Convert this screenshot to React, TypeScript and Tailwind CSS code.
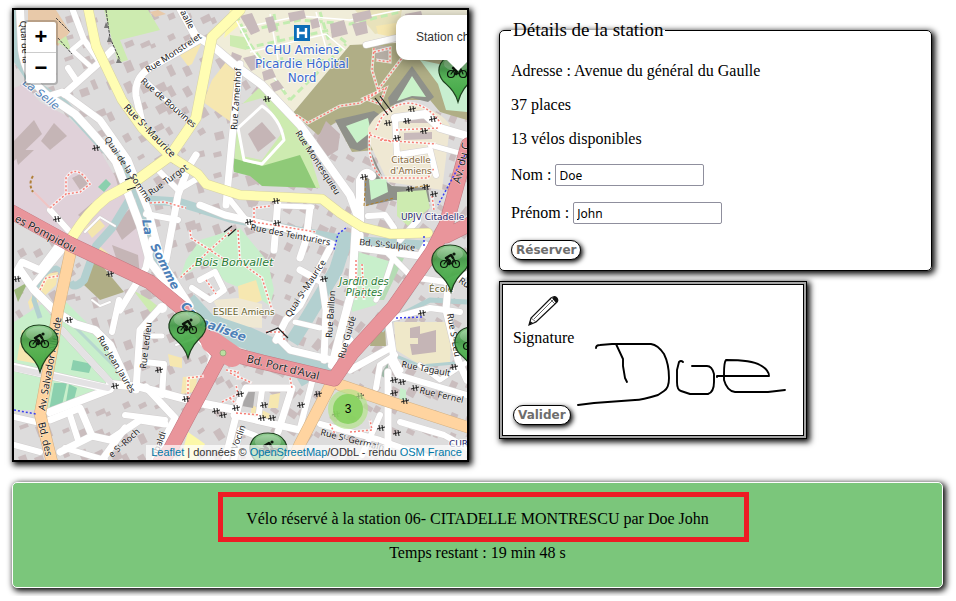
import React from 'react';

type Road = { d: string; w: number };

const whiteRoads: Road[] = [
  { d: 'M20 8L22 50Q26 78 48 96L75 114Q100 140 116 162L140 225L150 262L180 300L196 318', w: 8 },
  { d: 'M50 96L62 92L100 120L128 160L148 210L162 262L190 306', w: 7 },
  { d: 'M64 94L100 62L112 50', w: 7 },
  { d: 'M72 8L84 40L100 62', w: 6 },
  { d: 'M84 40L72 50L90 66', w: 5 },
  { d: 'M68 68L76 80', w: 6 },
  { d: 'M180 8L195 35L215 48L236 66L262 85L300 125L350 195L360 222', w: 8 },
  { d: 'M199 40L150 68Q134 78 136 96L142 122', w: 7 },
  { d: 'M143 78L192 125', w: 4 },
  { d: 'M240 64L236 100L232 140L226 205', w: 7 },
  { d: 'M196 155L188 168L178 195L166 260', w: 7 },
  { d: 'M160 172L178 190L195 180', w: 6 },
  { d: 'M200 205L225 215L300 232L332 244', w: 7 },
  { d: 'M146 214L178 220', w: 6 },
  { d: 'M230 200L250 225', w: 6 },
  { d: 'M278 200L274 250', w: 7 },
  { d: 'M310 208L306 240L300 258', w: 7 },
  { d: 'M282 206L312 207', w: 5 },
  { d: 'M330 248L300 305L286 320L276 340', w: 7 },
  { d: 'M356 222L352 290L332 365', w: 8 },
  { d: 'M360 222L360 180Q365 168 372 176', w: 8 },
  { d: 'M368 216L385 215L394 228', w: 6 },
  { d: 'M360 235L360 248L420 256L426 245', w: 7 },
  { d: 'M385 250L410 275', w: 6 },
  { d: 'M418 220L400 240', w: 6 },
  { d: 'M394 255L385 282L376 300', w: 5 },
  { d: 'M300 270L322 282L326 310L324 360', w: 7 },
  { d: 'M280 340L290 350L332 360L350 340', w: 7 },
  { d: 'M295 322L320 328', w: 5 },
  { d: 'M390 348L350 370', w: 7 },
  { d: 'M388 320L394 360L400 370', w: 7 },
  { d: 'M386 320L430 308L460 312', w: 6 },
  { d: 'M448 285L446 310L458 360L467 380', w: 7 },
  { d: 'M418 278L446 282L467 274', w: 6 },
  { d: 'M390 360L398 375L467 395', w: 6 },
  { d: 'M376 388L380 365L395 355', w: 6 },
  { d: 'M388 372L388 455', w: 7 },
  { d: 'M380 415L362 455', w: 6 },
  { d: 'M320 424L380 440L430 458', w: 6 },
  { d: 'M400 422L444 435L467 448', w: 6 },
  { d: 'M467 362L440 380L420 365', w: 5 },
  { d: 'M14 276L22 262L40 270L58 246', w: 7 },
  { d: 'M34 284L64 248', w: 6 },
  { d: 'M20 270L34 290L56 312L75 324L95 330L110 345L126 380', w: 8 },
  { d: 'M120 310L146 268L152 240', w: 7 },
  { d: 'M119 300L112 332', w: 6 },
  { d: 'M14 367L110 389L50 412', w: 8 },
  { d: 'M62 330L112 384', w: 6 },
  { d: 'M110 384L140 387L200 403L236 410', w: 8 },
  { d: 'M146 387L175 418L155 458', w: 7 },
  { d: 'M136 390L140 330L160 308', w: 7 },
  { d: 'M144 362L164 364L162 395', w: 6 },
  { d: 'M148 336L162 336', w: 5 },
  { d: 'M50 420L80 408L92 436L60 452', w: 7 },
  { d: 'M70 415L78 440', w: 6 },
  { d: 'M92 436L110 440L140 420L165 424', w: 7 },
  { d: 'M125 415L165 420', w: 6 },
  { d: 'M14 417L36 422', w: 6 },
  { d: 'M14 445L40 452', w: 6 },
  { d: 'M65 448L105 460', w: 6 },
  { d: 'M102 460L125 428', w: 7 },
  { d: 'M225 460L240 400L246 388L292 388L278 432', w: 7 },
  { d: 'M262 390L258 420', w: 6 },
  { d: 'M234 415L300 430', w: 7 },
  { d: 'M300 428L312 382', w: 6 },
  { d: 'M234 460L240 430L256 436', w: 6 },
  { d: 'M200 280L215 272L224 290L210 300L192 288', w: 6 },
  { d: 'M366 45L396 38', w: 6 },
  { d: 'M395 118L425 114L440 128L467 136', w: 8 },
  { d: 'M395 118L397 155L430 150L436 175', w: 6 },
  { d: 'M430 145L467 155', w: 5 },
  { d: 'M50 210L68 230', w: 6 },
  { d: 'M176 345L196 338L210 355L206 372', w: 2 },
  { d: 'M85 232L100 217L115 226', w: 2 },
  { d: 'M92 300L100 306L110 302', w: 2 },
];

const mapColours: [string, string][] = [
  // industrial ground and its sheds
  ['M14 88L24 84L40 102L65 115L95 142L120 185L140 220L150 262L146 286L80 250L14 207Z', '#e0d1d9'],
  ['M14 141L34 120L42 134L14 161Z', '#c5b5b6'],
  ['M41 141L54 123L67 136L50 150Z', '#c5b5b6'],
  ['M14 150L34 150L18 165Z', '#c5b5b6'],
  ['M72 178L82 173L90 184L80 190Z', '#c5b5b6'],
  ['M78 215L92 203L98 210L84 220Z', '#c5b5b6'],
  ['M115 176L126 172L130 180L118 186Z', '#c5b5b6'],
  ['M114 226L132 206L140 225L122 240Z', '#c5b5b6'],
  ['M112 245L138 255L140 276L118 264Z', '#c5b5b6'],
  ['M85 228L98 218L105 226L92 238Z', '#f3e6ae'],
  ['M96 243L118 262L98 254Z', '#f3e6ae'],
  ['M98 187L106 179L111 184L104 192Z', '#8bd0ae'],
  // north-west fields
  ['M28 10L56 10L70 32L58 46L28 22Z', '#e8c9a9'],
  ['M57 42L66 36L72 52Z', '#cdebb0'],
  ['M104 10L148 10L160 30L120 40L128 60L118 63Z', '#cdebb0'],
  ['M176 50L202 42L192 64L188 66Z', '#f6e7b0'],
  ['M212 80L226 62L240 66L231 122L203 102Z', '#f6e7b0'],
  ['M14 290L28 282L18 302Z', '#9db77a'],
  ['M150 12L158 10L166 14L155 17Z', '#e8c9a9'],
  // hospital grounds
  ['M232 10L467 10L467 44L350 45L293 113L278 95L232 62L214 42Z', '#f0edd9'],
  ['M230 10L242 10L238 26L224 38Z', '#fcf8a8'],
  ['M355 10L402 10L398 30L375 34Z', '#e8e2bb'],
  ['M376 26L402 22L398 38L378 34Z', '#f6e7b0'],
  ['M230 35L250 38L246 50L230 46Z', '#cdebb0'],
  // glacis of the citadel
  ['M293 113L350 45L420 42L467 74L467 120L440 112L430 100L396 100L376 150L352 152L336 122L318 135Z', '#b0ae86'],
  ['M420 60L467 70L467 112L446 110L438 84Z', '#c8efd0'],
  ['M412 66L434 97L428 102L412 98L390 106L388 98Z', '#8f918a'],
  ['M412 76L426 97L412 96L397 101Z', '#c9f2c9'],
  ['M335 120L374 111L392 122L392 136L360 151L350 148Z', '#8f918a'],
  ['M346 126L368 118L371 132L357 143Z', '#c9f2c9'],
  ['M368 128Q380 104 412 104Q444 112 450 126L442 190L388 182L368 140Z', '#efe8d3'],
  ['M366 206L363 176L376 176L370 150L384 180L392 186L428 188L430 202L394 200Z', '#8f918a'],
  ['M369 180L386 178L388 192L371 200Z', '#c9f2c9'],
  ['M397 192L426 190L430 208L408 226L397 216Z', '#cdebb0'],
  ['M374 46L390 46L388 62L376 60Z', '#b5ada4'],
  ['M404 116L438 116L438 123L404 123ZM404 133L432 132L432 139L404 140Z', '#c8babb'],
  // gardens and parks
  ['M236 110L262 85L300 125L310 150L312 162L320 188L262 184L234 158Z', '#cdebb0'],
  ['M232 158L262 166L300 155L316 188L262 186L250 176L234 172Z', '#8fca78'],
  ['M234 106L262 98L284 130L262 160L242 156Z', '#dedcda'],
  ['M248 134L262 122L276 138L258 152Z', '#c5b5b6'],
  ['M313 148L326 121L340 134L338 150L322 160Z', '#c5b5b6'],
  ['M186 260L200 240L240 228L268 262L274 290L270 306L250 292L226 282L205 262L180 278Z', '#c8efcb'],
  ['M358 252L392 262L376 305L352 312L352 280Z', '#c8efcb'],
  ['M394 256L404 258L384 300L376 300Z', '#b5dcb4'],
  ['M14 322L42 304L62 330L90 345L120 382L108 386L50 410L14 410Z', '#c8efcb'],
  ['M64 300L82 318L110 345L122 385L100 372L62 332Z', '#c8efcb'],
  ['M17 360L22 330L46 336L44 365Z', '#f6e7b0'],
  ['M73 360L92 364L89 373L71 370Z', '#8bd0ae'],
  ['M54 383L67 383L62 405L49 411Z', '#8bd0ae'],
  ['M69 384L77 388L74 400L66 402Z', '#8bd0ae'],
  ['M94 256L124 292L100 300L84 285Z', '#b0ae86'],
  ['M46 274L58 272L56 285L30 310L28 302Z', '#f6e7b0'],
  ['M133 290L150 300L165 312L150 312Z', '#cdebb0'],
  ['M168 354L182 358L182 368L170 366Z', '#f6e7b0'],
  ['M183 377L197 376L196 392L181 394Z', '#f6e7b0'],
  ['M188 432L205 444L196 460L180 460Z', '#fcf8a8'],
  ['M238 286L256 280L262 300L240 312Z', '#f6e7b0'],
  ['M213 300L238 298L262 304L262 328L226 326Z', '#efe8d3'],
  ['M394 322L452 322L450 362L422 366L396 350Z', '#efe8c9'],
  ['M410 328L420 326L420 334L436 330L436 352L412 355L410 344L418 344L418 338L410 338Z', '#c5b5b6'],
  ['M374 325L385 325L386 346L370 346Z', '#b0ae86'],
  ['M270 395L280 393L278 408L268 408Z', '#f6e7b0'],
  ['M252 405L270 414L268 422L250 420Z', '#f6e7b0'],
  ['M244 392L255 392L253 408L242 406Z', '#aaa8a8'],
  ['M380 375L388 363L388 380Z', '#9eb7a7'],
  ['M400 388L406 390L406 400L399 400Z', '#c8efcb'],
];

const waterways: Road[] = [
  { d: 'M15 10L18 60L34 84L64 104L104 148L124 165L139 195L148 232L162 268L188 304', w: 9 },
  { d: 'M186 302L206 324L250 339L292 358L334 368', w: 22 },
  { d: 'M134 192L112 228L96 246L84 280Q74 290 70 282', w: 8 },
  { d: 'M40 318L34 300Q38 272 56 268L66 274', w: 5 },
  { d: 'M148 200L178 202L230 218L345 240L440 246', w: 9 },
  { d: 'M348 232L336 270L306 320L292 342', w: 14 },
  { d: 'M440 246L425 268L395 312L380 330', w: 8 },
  { d: 'M384 324L430 300L467 302', w: 5 },
  { d: 'M396 356L420 366L467 362', w: 3 },
  { d: 'M300 374L306 384', w: 10 },
];

const redDots = [
  'M50 208L66 194L66 178Q74 166 84 176L90 184L80 192L66 194',
  'M296 115L308 123L340 106L360 103L378 92',
  'M374 48L372 70L378 90L396 66L402 58M374 52L390 48L390 62L376 60',
  'M376 130Q384 104 410 103Q430 106 441 124M370 132Q366 162 382 178L428 178L434 168M370 135L392 142M396 130L440 128M380 140L436 144',
  'M364 98L386 88L380 104Z',
  'M150 203L164 202L186 208',
  'M190 230L191 238L210 250L228 262M232 230L210 250L180 278M238 230L240 262L262 278L272 310M206 280L216 294',
  'M254 222L254 208L270 206M254 222L316 232',
  'M356 260L356 300M362 264L364 300',
  'M432 196L434 210',
  'M266 332L284 332L284 340',
  'M188 398L188 378L204 376',
  'M226 370L238 372L238 380M222 402L238 394L236 385M230 398L236 404',
  'M230 373L252 383M290 378L292 388',
  'M236 413L260 415M330 424L335 434M350 432L372 430L370 420',
  'M40 290L46 278L58 276',
];

const gates: [number, number][] = [
  [96, 148], [57, 219], [110, 274], [17, 279], [364, 177], [267, 99], [388, 123], [412, 109], [407, 121],
  [433, 119], [424, 131], [397, 138], [410, 189], [426, 187], [434, 194], [276, 201], [249, 222], [277, 223],
  [324, 279], [69, 320], [159, 370], [115, 386], [186, 399], [216, 411], [223, 415], [236, 408], [422, 313],
  [454, 367], [394, 380], [402, 382], [394, 393], [405, 401], [415, 388], [381, 428], [397, 433], [360, 396],
  [301, 405], [336, 414], [318, 394], [240, 394], [264, 405], [262, 418], [272, 418],
];

type Label = [text: string, x: number, y: number, angle: number, size: number];

const streets: Label[] = [
  ['Quai de la', 20, 21, 86, 9],
  ['aalle', 180, 12, 62, 9],
  ['Rue Monstrelet', 148, 73, -33, 9],
  ['Rue de Bouvines', 140, 82, 41, 9],
  ['Rue Sᵗ-Maurice', 123, 108, 46, 10],
  ['Quai de la Somme', 104, 139, 56, 9],
  ['Rue Turgot', 151, 196, -36, 9],
  ['Rue Zamenhof', 237, 130, -86, 9],
  ['Rue Montesquieu', 295, 133, 57, 9],
  ['Rue des Teinturiers', 250, 230, 11, 9],
  ['Bd. Sᵗ-Sulpice', 359, 245, 6, 9],
  ['Quai Sᵗ-Maurice', 290, 318, -57, 9],
  ['Rue Baillon', 332, 338, -86, 9],
  ['Rue Guidé', 344, 359, -74, 9],
  ['Rue Ledieu', 146, 369, -83, 9],
  ['Rue Jean Jaurès', 97, 338, 59, 9],
  ['Av. Salvador Allende', 45, 411, -80, 10],
  ['Bd. des', 38, 423, 77, 10],
  ['es Pompidou', 14, 221, 28, 11],
  ["Bd. Port d'Aval", 246, 362, 14, 11],
  ['Rue Tagault', 401, 367, 11, 9],
  ['Rue Fernel', 419, 393, 13, 9],
  ['Rue Sᵗ-Leu', 447, 314, 80, 9],
  ['Rue Sᵗ-Germain', 320, 435, 14, 9],
  ['e Sᵗ-Roch', 112, 458, -42, 9],
  ['Voclin', 237, 450, -70, 9],
  ['ribaldi', 157, 458, -70, 9],
  ['Av. du C', 460, 184, -76, 11],
  ['Ru', 458, 282, 35, 9],
];

const bikePins: [number, number][] = [
  [457, 71],
  [450, 261],
  [187, 327],
  [39, 341],
  [473, 343],
  [268, 449],
];

// small houses scattered over the built-up ground
const houses = Array.from({ length: 620 }, (_, i) => {
  const col = i % 31;
  const row = Math.floor(i / 31);
  const n = (i * 7919 + row * 104729) % 97;
  return {
    x: 15 + col * 15 + (n % 6),
    y: 12 + row * 23 + ((n * 5) % 11),
    w: 5 + (n % 6),
    h: 4 + ((n * 3) % 8),
    angle: (col > 15 ? 20 : -32) + (n % 7) * 3,
  };
});

function BikePin({ x, y }: { x: number; y: number }) {
  return (
    <g transform={`translate(${x} ${y})`}>
      <path
        d="M1 31C-2 20-8 16-14 10C-23-2-16-16 0-16C16-16 24-2 15 9C9 15 4 20 1 31Z"
        fill="url(#pin)"
        stroke="#1d3f1d"
        strokeWidth="1.2"
        fillOpacity=".9"
      />
      <ellipse cx="0" cy="-7" rx="13" ry="7" fill="#fff" fillOpacity=".2" />
      <g fill="none" stroke="#0b160b" strokeWidth="1.2" strokeLinecap="round" strokeLinejoin="round">
        <circle cx="-6" cy="3" r="3.5" />
        <circle cx="6" cy="3" r="3.5" />
        <path d="M-6 3L-3-1L1 3M1 3L4-2L6 3" />
        <path strokeWidth="2.4" d="M-4-3L1-6L3-3M-4-3L0 0L-1 3" />
        <circle cx="4" cy="-7" r="1" fill="#0b160b" />
      </g>
    </g>
  );
}

function CityMap() {
  return (
    <svg
      viewBox="14 10 453 450"
      preserveAspectRatio="xMidYMid slice"
      className="block h-full w-full"
      role="img"
      aria-label="Carte des stations de vélos d'Amiens"
    >
      <defs>
        <linearGradient id="pin" x1="0" y1="0" x2="0" y2="1">
          <stop offset="0" stopColor="#8fcf8f" />
          <stop offset=".3" stopColor="#3c9440" />
          <stop offset=".5" stopColor="#4aad4a" />
          <stop offset="1" stopColor="#2f9c34" />
        </linearGradient>
      </defs>
      <rect x="14" y="10" width="453" height="450" fill="#dddcdc" />
      <g fill="#cabdbe">
        {houses.map((h, i) => (
          <rect key={i} x={h.x} y={h.y} width={h.w} height={h.h} transform={`rotate(${h.angle} ${h.x} ${h.y})`} />
        ))}
      </g>
      {mapColours.map(([d, fill], i) => (
        <path key={i} d={d} fill={fill} />
      ))}
      <g fill="none" stroke="#c3ecb0" strokeWidth="3" strokeDasharray="7 4">
        <path d="M240 32L300 20L350 24L400 12M246 48L330 30L348 44M262 62L340 60M236 14L250 44L290 100M320 12L330 45M274 14L282 60M290 100L346 44" />
      </g>
      <g fill="none" stroke="#fff" strokeWidth="1.5">
        <path d="M240 28L300 16L350 20L400 10M250 52L326 34L345 50M234 16L252 50L284 90M316 12L326 48M270 14L278 60" />
      </g>
      <g fill="#c8babb">
        <path d="M288 13l16-3 2 8-16 4zM240 16l12-3 8 18-9 4zM265 18l8-2 4 14-8 3zM330 24l14-4 4 14-16 4zM352 14l18-4 2 8-18 5zM352 24l14-3 2 12-12 3zM243 58l12-3 6 12-10 4zM262 72l10-4 4 9-12 4zM270 84l8-4 6 8-10 4zM232 52l10 4-3 8-9-3zM310 20l8-2 2 9-8 2zM405 14l16-3 2 7-16 4z" />
      </g>
      <g fill="none" stroke="#b3d0d0" strokeLinejoin="round">
        {waterways.map((r) => (
          <path key={r.d} d={r.d} strokeWidth={r.w} />
        ))}
        <path d="M74 326L120 372" stroke="#b7d7cf" strokeWidth="3" />
      </g>
      <g fill="none" strokeLinejoin="round" strokeLinecap="round">
        <path d="M238 128L262 106Q280 118 284 140L262 164L244 160Z" stroke="#fff" strokeWidth="3" />
        {whiteRoads.map((r) => (
          <path key={r.d} d={r.d} stroke="#d2cfcf" strokeWidth={r.w + 1} />
        ))}
        {whiteRoads.map((r) => (
          <path key={r.d} d={r.d} stroke="#fff" strokeWidth={r.w} />
        ))}
        <path d="M62 330L112 384M14 368L108 388" stroke="#e4e2e4" strokeWidth="6" />
        <path d="M240 10L212 37L207 62L196 118L170 156L133 183L107 197Q88 212 73 236" stroke="#d8d3a2" strokeWidth="11" />
        <path d="M88 8L96 46L122 100L142 128L170 156L198 174L206 184L240 195L322 199L340 213L362 227L390 234L428 233" stroke="#d8d3a2" strokeWidth="10" />
        <path d="M240 10L212 37L207 62L196 118L170 156L133 183L107 197Q88 212 73 236" stroke="#fffdb3" strokeWidth="10" />
        <path d="M88 8L96 46L122 100L142 128L170 156L198 174L206 184L240 195L322 199L340 213L362 227L390 234L428 233" stroke="#fffdb3" strokeWidth="9" />
        <path d="M71 250L58 310L52 350L40 414L52 462M330 386L300 444L292 462M340 385L390 402L470 428" stroke="#d2b184" strokeWidth="12" />
        <path d="M71 250L58 310L52 350L40 414L52 462M330 386L300 444L292 462M340 385L390 402L470 428" stroke="#ffd4a0" strokeWidth="11" />
        <path d="M10 211L70 244L150 282L184 310L216 350L262 362L334 379L352 353L393 308L432 252L446 225L468 145M446 236L470 224M218 360L170 450L160 462" stroke="#c27880" strokeWidth="15" />
        <path d="M212 342L232 356" stroke="#e9959b" strokeWidth="22" />
        <path d="M10 211L70 244L150 282L184 310L216 350L262 362L334 379L352 353L393 308L432 252L446 225L468 145M446 236L470 224M218 360L170 450L160 462" stroke="#e9959b" strokeWidth="14" />
      </g>
      <circle cx="223" cy="353" r="3" fill="#b9dfa0" stroke="#9fa77d" />
      <circle cx="162" cy="308" r="5" fill="#fff" />
      <g fill="none" stroke="#fff" strokeWidth="3" strokeOpacity=".7">
        {redDots.map((d) => (
          <path key={d} d={d} />
        ))}
      </g>
      <g fill="none" stroke="#f78077" strokeWidth="1.5" strokeDasharray="2 2">
        {redDots.map((d) => (
          <path key={d} d={d} />
        ))}
      </g>
      <path d="M34 192L50 208" fill="none" stroke="#f0c4c4" strokeWidth="2" />
      <path d="M366 178L364 206L394 198M410 188L430 185" fill="none" stroke="#b17f27" strokeDasharray="3 2" />
      <path d="M33 176Q28 184 33 192" fill="none" stroke="#b1803a" strokeWidth="2" strokeDasharray="3 2" />
      <path
        d="M14 410L36 414M346 228L338 234L334 250M424 236L424 248M396 318L422 317M465 155L438 205"
        fill="none"
        stroke="#3a3ff0"
        strokeWidth="1.5"
        strokeDasharray="2 2"
      />
      <path d="M125 180L133 177M127 190L136 187M224 232L232 226M228 236L236 229M375 98L388 115M380 96L392 112M266 333L278 328L288 338" fill="none" stroke="#222" strokeWidth="1.2" />
      <path d="M56 18L70 32M58 38L72 54M106 10L110 38L120 60" fill="none" stroke="#4a4a4a" strokeDasharray="3 1" />
      <path d="M118 58l4 5h-6zM106 22l3 6h-5zM109 36l3 6h-5z" fill="#777" />
      <g fill="none" stroke="#222" strokeWidth="1">
        {gates.map(([x, y]) => (
          <path key={`${x}-${y}`} d={`M${x - 2} ${y - 3}L${x - 1} ${y + 3}M${x + 1} ${y - 3}L${x + 2} ${y + 3}M${x - 4} ${y + 1}L${x + 4} ${y - 1}`} />
        ))}
      </g>

      <g
        fill="#222"
        stroke="#fff"
        strokeWidth="1"
        strokeOpacity=".6"
        style={{ paintOrder: 'stroke' }}
        className="[font-family:'Noto_Sans','DejaVu_Sans',sans-serif]"
      >
        {streets.map(([text, x, y, angle, size]) => (
          <text key={text + x} fontSize={size} transform={`translate(${x} ${y}) rotate(${angle})`}>
            {text}
          </text>
        ))}
      </g>

      <g
        stroke="#fff"
        strokeWidth="2"
        strokeOpacity=".75"
        strokeLinejoin="round"
        style={{ paintOrder: 'stroke' }}
        className="[font-family:'DejaVu_Sans','Noto_Sans',sans-serif]"
      >
        <g fill="#4d80b8" fontSize="12" fontStyle="italic" fontWeight="bold">
          <text transform="translate(142 220) rotate(80)">La</text>
          <text transform="translate(150 246) rotate(63)">Somme</text>
          <text transform="translate(180 307) rotate(42)">Ca</text>
          <text transform="translate(199 325) rotate(20)">nalisée</text>
          <text fontSize="11" fontWeight="normal" transform="translate(22 84) rotate(38)">La Selle</text>
        </g>
        <g fill="#3968cf" fontSize="12" textAnchor="middle">
          <text x="302" y="54">CHU Amiens</text>
          <text x="302" y="68">Picardie Hôpital</text>
          <text x="302" y="82">Nord</text>
        </g>
        <g fill="#84683c" fontSize="9" textAnchor="middle">
          <text x="411" y="163">Citadelle</text>
          <text x="411" y="174">d'Amiens</text>
        </g>
        <g fill="#2b2870" fontSize="9">
          <text x="401" y="220">UPJV Citadelle</text>
          <text x="449" y="447">CUR</text>
        </g>
        <g fill="#2c7d37" fontStyle="italic">
          <text x="195" y="266" fontSize="11">Bois Bonvallet</text>
          <text x="364" y="285" fontSize="10" textAnchor="middle">Jardin des</text>
          <text x="364" y="296" fontSize="10" textAnchor="middle">Plantes</text>
        </g>
        <g fill="#66622c" fontSize="9">
          <text x="213" y="315">ESIEE Amiens</text>
          <text x="429" y="292">École</text>
        </g>
      </g>
      <rect x="294" y="25" width="16" height="16" fill="#0b6db7" />
      <path d="M298 28V38M306 28V38M298 33H306" stroke="#fff" strokeWidth="2.4" />

      {bikePins.map(([x, y]) => (
        <BikePin key={`${x}-${y}`} x={x} y={y} />
      ))}
      <circle cx="348" cy="409" r="20" fill="#b5e28c" fillOpacity=".7" />
      <circle cx="348" cy="409" r="15" fill="#7ed055" fillOpacity=".8" />
      <text x="348" y="413" fontSize="12" textAnchor="middle" className="[font-family:'Liberation_Sans',sans-serif]">
        3
      </text>
    </svg>
  );
}

const panelShadow = 'shadow-[2px_2px_6px_1px_#000]';
const pillButton =
  "block h-5 rounded-[10px] border border-black bg-white px-1 text-[12px] leading-[18px] font-bold text-[#6d6d6d] shadow-[2px_2px_5px_#000] [font-family:'DejaVu_Sans',sans-serif]";
const textField =
  "h-[22px] w-[149px] rounded-[2px] border border-[#8f8f9d] bg-white px-[3px] text-[12px] [font-family:'Noto_Sans',sans-serif]";

function StationMap() {
  return (
    <section className={`relative h-[454px] overflow-hidden border-2 border-black ${panelShadow} [font-family:'Liberation_Sans',Arial,sans-serif]`}>
      <CityMap />
      <div className="absolute top-[5px] -right-10 h-[45px] w-[111px] rounded-xl bg-white py-[13px] pl-5 text-[12px] leading-[18px] whitespace-nowrap text-[#333] shadow-[0_3px_14px_rgba(0,0,0,0.4)]">
        Station ch
        <svg viewBox="0 0 24 14" className="absolute top-[44px] left-[50px] h-[14px] w-6" aria-hidden="true">
          <path d="M0 0H24L12 12Z" fill="#fff" />
        </svg>
      </div>
      <div className="absolute top-2.5 left-2.5 flex w-[34px] flex-col rounded border-2 border-black/20 bg-white bg-clip-padding text-[22px] leading-[30px] font-bold text-black">
        <button type="button" aria-label="Zoom avant" className="h-[31px] border-b border-[#ccc]">+</button>
        <button type="button" aria-label="Zoom arrière" className="h-[30px]">−</button>
      </div>
      <div className="absolute right-0 bottom-0 bg-white/70 px-[5px] text-[11px] leading-[15px] whitespace-nowrap text-[#333]">
        <a href="#leaflet" className="text-[#0078a8]">Leaflet</a> | données ©{' '}
        <a href="#osm" className="text-[#0078a8]">OpenStreetMap</a>/ODbL - rendu{' '}
        <a href="#osm-france" className="text-[#0078a8]">OSM France</a>
      </div>
    </section>
  );
}

function StationDetails() {
  return (
    <fieldset className={`rounded-[5px] border border-black px-[11px] pb-2.5 ${panelShadow}`}>
      <legend className="px-0.5 text-[19px] leading-5">Détails de la station</legend>
      <div className="flex flex-col gap-4 pt-[22px]">
        <p>Adresse : Avenue du général du Gaulle</p>
        <p>37 places</p>
        <p>13 vélos disponibles</p>
        <div className="flex items-center gap-1">
          <label htmlFor="nom">Nom :</label>
          <input id="nom" type="text" defaultValue="Doe" className={textField} />
        </div>
        <div className="flex items-center gap-1">
          <label htmlFor="prenom">Prénom :</label>
          <input id="prenom" type="text" defaultValue="John" className={textField} />
        </div>
        <button type="button" className={`self-start ${pillButton}`}>Réserver</button>
      </div>
    </fieldset>
  );
}

function SignaturePad() {
  return (
    <section className={`w-[308px] border border-black bg-[#a6a6a6] p-0.5 ${panelShadow}`}>
      <div className="relative flex h-[152px] flex-col items-start border border-black bg-white px-2.5 pt-2.5 pb-2.5">
        <svg viewBox="0 0 32 32" className="ml-3.5 h-8 w-8" aria-hidden="true">
          <path d="M2 30L4 23L24 3Q28 0 30 3Q32 6 29 8L9 27Z" fill="#fff" stroke="#111" strokeWidth="1.2" />
          <path d="M4 23L9 27M7 24L27 4M23 4L28 9" fill="none" stroke="#444" strokeWidth=".8" />
          <path d="M25 3Q28 0 30 3Q32 6 29 8Z" fill="#111" />
          <path d="M2 30L3 26L6 28Z" fill="#111" />
        </svg>
        <h2 className="leading-[22px]">Signature</h2>
        <button type="button" className={`mt-auto ${pillButton}`}>Valider</button>
        <svg viewBox="503 285 300 150" className="pointer-events-none absolute inset-0 h-full w-full" role="img" aria-label="Doe">
          <g fill="none" stroke="#000" strokeWidth="1.9" strokeLinecap="round" strokeLinejoin="round">
            <path d="M596 348Q596 345 600 345L612 344H651Q658 345 664 354Q669 364 669 378Q669 388 664 391L658 395Q642 400 635 400L594 403L578 405" />
            <path d="M616 344L623 359V366L625 378L627 382" />
            <path d="M683 362Q681 360 679 362L677 370V382Q677 390 681 391L690 394H708Q714 392 714 382V374Q712 366 707 366H692" />
            <path d="M717 377V376H769Q769 370 760 365Q752 360 726 360Q724 362 724 374V380Q727 391 735 392H768L785 390" />
          </g>
        </svg>
      </div>
    </section>
  );
}

export default function App() {
  return (
    <main className="flex flex-col gap-5 bg-white py-2 pr-[13px] pl-3 text-[16px] leading-[18px] text-black [font-family:'Liberation_Serif','Times_New_Roman',serif]">
      <div className="grid grid-cols-[457fr_433fr] gap-[30px] pr-[11px]">
        <StationMap />
        <div className="flex flex-col gap-2.5 pt-3">
          <StationDetails />
          <SignaturePad />
        </div>
      </div>
      <section className={`flex h-[106px] flex-col items-center gap-4 rounded-[5px] border border-white bg-[#7bc67b] pt-[27px] ${panelShadow}`}>
        <p className="relative">
          Vélo réservé à la station 06- CITADELLE MONTRESCU par Doe John
          <span className="absolute -top-[18px] -right-10 -bottom-3.5 -left-7 border-5 border-[#ed1c24]" />
        </p>
        <p>Temps restant : 19 min 48 s</p>
      </section>
    </main>
  );
}
